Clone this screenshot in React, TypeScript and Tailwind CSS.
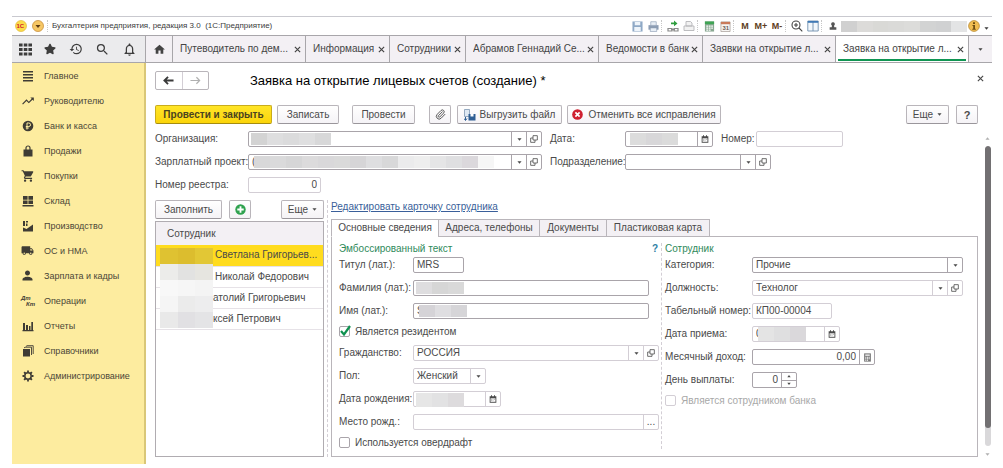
import { useId, useState } from 'react';
import type { ReactNode } from 'react';
import { FaStar } from 'react-icons/fa';
import { MdHistory, MdSearch, MdNotificationsNone, MdHome, MdLocalShipping, MdShoppingCart, MdPerson, MdTrendingUp } from 'react-icons/md';
import { Paperclip } from 'lucide-react';

const Svg = ({ children, className = 'size-3' }: { children: ReactNode; className?: string }) => (
  <svg viewBox="0 0 12 12" className={className} fill="currentColor" aria-hidden="true">
    {children}
  </svg>
);

const Caret = () => (
  <Svg className="size-[5px] shrink-0">
    <path d="M1 3h10L6 9z" />
  </Svg>
);

const CloseIcon = () => (
  <Svg className="size-[7px]">
    <path d="M1.5 1.5l9 9M10.5 1.5l-9 9" stroke="currentColor" strokeWidth="2" />
  </Svg>
);

const OpenIcon = () => (
  <Svg className="size-2">
    <path d="M4.5 1h6.500v6.500h-6.500zM4.500 4.500h-3.500v6.500h6.500v-3.500" fill="none" stroke="currentColor" strokeWidth="1.200" />
  </Svg>
);

const CalendarIcon = () => (
  <Svg className="size-2">
    <path d="M1 2h2V.5h1.500V2h3V.5H9V2h2v9.500H1z" />
    <path d="M2.300 5h7.400v5.200H2.300z" fill="#fff" />
    <path d="M3.200 6h1.200v1H3.200zM5.400 6h1.200v1H5.400zM7.600 6h1.200v1H7.600zM3.200 8h1.200v1H3.200zM5.400 8h1.200v1H5.400z" fill="#999" />
  </Svg>
);

const CalcIcon = () => (
  <Svg className="size-[9px]">
    <path d="M1.500.5h9v11h-9z" fill="#777" />
    <path d="M3 2h6v1.800H3zM3 5h1.500v1.200H3zM5.300 5h1.500v1.200H5.300zM7.500 5H9v1.200H7.500zM3 7h1.500v1.200H3zM5.300 7h1.500v1.200H5.300zM7.500 7H9v1.200H7.500zM3 9h1.500v1.200H3zM5.300 9h1.500v1.200H5.300z" fill="#fff" />
  </Svg>
);

// Grey cells that hide personal data
const Mosaic = ({ cells, className }: { cells: string[]; className: string }) => (
  <span className={`absolute flex pointer-events-none ${className}`} aria-hidden="true">
    {cells.map((c, i) => (
      <span key={i} className={`flex-1 ${c}`} />
    ))}
  </span>
);

type FieldProps = {
  label: string;
  labelClass: string;
  width: string;
  value?: string;
  kind?: 'text' | 'select' | 'number' | 'spin';
  tail?: ('open' | 'calendar' | 'calc' | 'dots')[];
  light?: boolean;
  mosaic?: ReactNode;
};

const tailIcons = { open: <OpenIcon />, calendar: <CalendarIcon />, calc: <CalcIcon />, dots: '...' };
const tailNames = { open: 'Открыть', calendar: 'Календарь', calc: 'Калькулятор', dots: 'Выбрать' };

const Field = ({ label, labelClass, width, value = '', kind = 'text', tail = [], light, mosaic }: FieldProps) => {
  const id = useId();
  const line = light ? 'border-[#d3ced5]' : 'border-[#a9a4aa]';
  const right = kind === 'number' || kind === 'spin';
  return (
    <div className="flex items-center h-4">
      <label htmlFor={id} className={`shrink-0 whitespace-nowrap ${labelClass}`}>
        {label}
      </label>
      <div className={`relative flex h-4 border rounded-[2px] bg-white ${line} ${width}`}>
        {kind === 'select' ? (
          <>
            <select id={id} defaultValue={value} className="flex-1 min-w-0 appearance-none bg-transparent px-[3px] leading-[14px] outline-none">
              <option>{value}</option>
            </select>
            <span className={`w-[15px] shrink-0 flex items-center justify-center border-l pointer-events-none ${line}`}>
              <Caret />
            </span>
          </>
        ) : (
          <input
            id={id}
            defaultValue={value}
            className={`flex-1 min-w-0 bg-transparent px-[3px] leading-[14px] outline-none ${right ? 'text-right' : ''}`}
          />
        )}
        {tail.map((t) => (
          <button key={t} aria-label={tailNames[t]} className={`w-[15px] shrink-0 flex items-center justify-center border-l ${line}`}>
            {tailIcons[t]}
          </button>
        ))}
        {kind === 'spin' && (
          <div className={`w-[15px] shrink-0 flex flex-col border-l ${line}`}>
            <button aria-label="Больше" className={`flex-1 flex items-center justify-center border-b ${line}`}>
              <Svg className="size-1">
                <path d="M1 10h10L6 3z" />
              </Svg>
            </button>
            <button aria-label="Меньше" className="flex-1 flex items-center justify-center">
              <Svg className="size-1">
                <path d="M1 2h10L6 9z" />
              </Svg>
            </button>
          </div>
        )}
        {mosaic}
      </div>
    </div>
  );
};

const Check = ({ label, checked, disabled }: { label: string; checked?: boolean; disabled?: boolean }) => (
  <label className={`flex items-center gap-1 h-3 ${disabled ? 'text-[#a8a8a8]' : ''}`}>
    <span className="relative size-3">
      <input
        type="checkbox"
        defaultChecked={checked}
        disabled={disabled}
        className="peer block size-[11px] appearance-none border border-[#a9a4aa] rounded-[2px] bg-white disabled:border-[#d3ced5]"
      />
      <svg viewBox="0 0 12 12" className="absolute left-0 -top-px size-3 hidden peer-checked:block pointer-events-none" fill="none" aria-hidden="true">
        <path d="M2 6l3 3.500L11 1" stroke="#0f9150" strokeWidth="2.200" />
      </svg>
    </span>
    {label}
  </label>
);

const Button = ({ children, className, label }: { children: ReactNode; className: string; label?: string }) => (
  <button
    aria-label={label}
    className={`h-[19px] shrink-0 flex items-center justify-center gap-1 border rounded-[2px] whitespace-nowrap ${className}`}
  >
    {children}
  </button>
);

const plain = 'border-[#b9b5ba] border-b-[#9a969b] bg-linear-to-b from-white to-[#f5f3f6]';

const sections: { name: string; icon: ReactNode }[] = [
  { name: 'Главное', icon: <Svg><path d="M1 1h10v1.500H1zM1 4h10v1.500H1zM1 7h10v1.500H1zM1 10h10v1.500H1z" /></Svg> },
  { name: 'Руководителю', icon: <MdTrendingUp className="size-[14px]" /> },
  {
    name: 'Банк и касса',
    icon: (
      <Svg>
        <circle cx="6" cy="6" r="5.300" />
        <path d="M5 9.500V3h1.800a1.700 1.700 0 010 3.500H3.800M3.800 8h3" fill="none" stroke="#fdec9f" strokeWidth="1" />
      </Svg>
    ),
  },
  {
    name: 'Продажи',
    icon: (
      <Svg>
        <path d="M1.500 4.500h9v7h-9z" />
        <path d="M4 6V3a2 2 0 014 0v3" fill="none" stroke="currentColor" strokeWidth="1.200" />
      </Svg>
    ),
  },
  { name: 'Покупки', icon: <MdShoppingCart className="size-[14px]" /> },
  { name: 'Склад', icon: <Svg><path d="M1 1h4.600v3.700H1zM6.400 1H11v3.700H6.400zM1 5.500h4.600v3.500H1zM6.400 5.500H11v3.500H6.400zM.5 10h11v1.400H.5z" /></Svg> },
  { name: 'Производство', icon: <Svg><path d="M1 11.500V7.500L4.500 9 11 4.500v7zM1 1h2v5H1zM4 1h2v1.500H4zM4 3.500h1.500V6H4z" /></Svg> },
  { name: 'ОС и НМА', icon: <MdLocalShipping className="size-[13px]" /> },
  { name: 'Зарплата и кадры', icon: <MdPerson className="size-[15px]" /> },
  {
    name: 'Операции',
    icon: (
      <span className="w-[13px] text-[6px] leading-[6px] font-bold italic">
        Дт
        <span className="block pl-[5px]">Кт</span>
      </span>
    ),
  },
  { name: 'Отчеты', icon: <Svg><path d="M1 3h2v7H1zM4 5h2v5H4zM7 6h1.500v4H7zM9.300 2h1.700v8H9.300zM.5 10h11v1.200H.5z" /></Svg> },
  {
    name: 'Справочники',
    icon: (
      <Svg>
        <path d="M1 4h7v7.500H1z" />
        <path d="M2 3l1-.8h6.500V10M4 1.500L5 .7h6.200V9" fill="none" stroke="currentColor" strokeWidth=".9" />
      </Svg>
    ),
  },
  {
    name: 'Администрирование',
    icon: (
      <Svg>
        <circle cx="6" cy="6" r="3.200" fill="none" stroke="currentColor" strokeWidth="1.500" />
        <path d="M6 .5v2M6 9.500v2M.5 6h2M9.500 6h2M2.100 2.100l1.400 1.400M8.500 8.500l1.400 1.400M2.100 9.900l1.400-1.400M8.500 3.500l1.400-1.400" stroke="currentColor" strokeWidth="1.800" />
      </Svg>
    ),
  },
];

const openTabs = [
  { title: 'Путеводитель по дем...', width: 'w-[133px]' },
  { title: 'Информация', width: 'w-[84px]' },
  { title: 'Сотрудники', width: 'w-[76px]' },
  { title: 'Абрамов Геннадий Се...', width: 'w-[133px]' },
  { title: 'Ведомости в банк', width: 'w-[104px]' },
  { title: 'Заявки на открытие л...', width: 'w-[133px]' },
  { title: 'Заявка на открытие л...', width: 'w-[133px]' },
];

const employees = [
  { name: 'Светлана Григорьев...', pad: 'pl-[59px]' },
  { name: 'Николай Федорович', pad: 'pl-[59px]' },
  { name: 'атолий Григорьевич', pad: 'pl-[57px]' },
  { name: 'ксей Петрович', pad: 'pl-[57px]' },
];

const employeeMosaic = [
  'bg-[#dfc231]', 'bg-[#dcbd2e]', 'bg-[#e2c735]',
  'bg-[#ececea]', 'bg-[#e2e2e1]', 'bg-[#e6e5e0]',
  'bg-[#f8f8f8]', 'bg-[#f6f6f6]', 'bg-[#f4f4f4]',
  'bg-[#f5f5f5]', 'bg-[#ebebeb]', 'bg-[#ededee]',
  'bg-[#e9e9e9]', 'bg-[#e1e0e3]', 'bg-[#e4e4e6]',
];

const cardTabs = [
  { name: 'Основные сведения', width: 'w-[108px]' },
  { name: 'Адреса, телефоны', width: 'w-[102px]' },
  { name: 'Документы', width: 'w-[68px]' },
  { name: 'Пластиковая карта', width: 'w-[104px]' },
];

const Sep = () => <span className="w-1 h-3 border-l border-dotted border-[#c8c8c8]" />;

const SysButton = ({ label, children }: { label: string; children: ReactNode }) => (
  <button aria-label={label} className="w-4 h-4 flex items-center justify-center">
    {children}
  </button>
);

const TitleBar = () => (
  <header className="flex items-center h-[19px] border-t border-[#c9c9cf] pl-[3px] text-[8px] text-[#3c3c3c]">
    <svg viewBox="0 0 12 12" className="size-3" aria-hidden="true">
      <circle cx="6" cy="6" r="5.500" fill="#fbdc4a" stroke="#e3b93a" strokeWidth=".7" />
      <text x="1.500" y="8" fontSize="6" fontWeight="bold" fill="#d3202a">1С</text>
    </svg>
    <button aria-label="Главное меню" className="ml-[5px]">
      <svg viewBox="0 0 12 12" className="size-3 block" aria-hidden="true">
        <circle cx="6" cy="6" r="5.500" fill="#f6c765" stroke="#c98f3c" strokeWidth=".8" />
        <path d="M3.500 5h5L6 8z" fill="#5b3a14" />
      </svg>
    </button>
    <span className="ml-[3px] h-3 border-l border-dotted border-[#c8c8c8]" />
    <span className="ml-1 whitespace-pre">Бухгалтерия предприятия, редакция 3.0  (1С:Предприятие)</span>

    <div className="ml-auto flex items-center">
      <SysButton label="Сохранить">
        <Svg className="size-[11px]">
          <path d="M.5.5h11v11H.5z" fill="#8fa9c6" />
          <path d="M3 1h6v3.500H3zM2.500 6.500h7v4.500h-7z" fill="#eef4fa" />
        </Svg>
      </SysButton>
      <SysButton label="Печать">
        <Svg className="size-[11px]">
          <path d="M.5 4.500h11v5H.5z" fill="#8c9db4" />
          <path d="M3 .8h6v4H3zM2.500 7.500h7v4h-7z" fill="#e9eff6" stroke="#8c9db4" strokeWidth=".7" />
        </Svg>
      </SysButton>
      <Sep />
      <SysButton label="Получить ссылку">
        <Svg className="size-3">
          <path d="M1 8.500h4v2.500H1zM7 8.500h4v2.500H7zM4 9.700h4" fill="none" stroke="#8a8a8a" strokeWidth="1.200" />
          <path d="M4 4.200V2.500h3V.500l3.500 2.900L7 6.300V4.200z" fill="#2f9e3f" />
        </Svg>
      </SysButton>
      <SysButton label="Перейти по ссылке">
        <Svg className="size-3">
          <path d="M1 6h10v4.500H1zM3 6V1.500h4.500L9 3v3z" fill="#f2f2f2" stroke="#b5b5b9" strokeWidth=".9" />
        </Svg>
      </SysButton>
      <Sep />
      <SysButton label="Калькулятор">
        <Svg className="size-[11px]">
          <path d="M1 .5h10v11H1z" fill="#8aa893" />
          <path d="M1 .5h10v3H1z" fill="#3fa454" />
          <path d="M2.500 5h2v1.300h-2zM5.200 5h2v1.300h-2zM7.900 5h1.800v1.300H7.900zM2.500 7.200h2v1.300h-2zM5.200 7.200h2v1.300h-2zM7.900 7.200h1.800v1.300H7.900zM2.500 9.300h2v1.300h-2zM5.200 9.300h2v1.300h-2z" fill="#fff" />
        </Svg>
      </SysButton>
      <SysButton label="Календарь">
        <Svg className="size-[11px]">
          <path d="M1 1h10v10.500H1z" fill="#f7f5f3" stroke="#a69c98" strokeWidth=".8" />
          <path d="M1 1h10v2.500H1z" fill="#c97a5a" />
          <text x="2.600" y="10" fontSize="6.500" fontWeight="bold" fill="#6b5a55">31</text>
        </Svg>
      </SysButton>
      <Sep />
      {['M', 'M+', 'M-'].map((m) => (
        <button key={m} className="w-4 text-[9px] font-bold text-[#5e3d22]">
          {m}
        </button>
      ))}
      <Sep />
      <SysButton label="Масштаб">
        <Svg className="size-3">
          <path d="M5 1a4 4 0 100 8 4 4 0 000-8zM8 8l3.300 3.300M3 5h4M5 3v4" fill="none" stroke="#444" strokeWidth="1.100" />
        </Svg>
      </SysButton>
      <SysButton label="Панели">
        <Svg className="size-3">
          <path d="M.8 1h10.400v10H.8zM6 2v9" fill="#f3f8fc" stroke="#6f8fae" strokeWidth=".9" />
          <path d="M.8 1h10.400v1.800H.8z" fill="#3f79b5" />
        </Svg>
      </SysButton>
      <Sep />
      <SysButton label="Пользователь">
        <Svg className="size-2 text-[#555]">
          <path d="M6 .5a2.700 2.700 0 011.500 5L8 8h3v3.500H1V8h3l.5-2.500A2.700 2.700 0 016 .5z" />
        </Svg>
      </SysButton>
      <span className="relative w-[126px] h-[11px]">
        <Mosaic
          className="inset-0"
          cells={['bg-[#d0d0d0]', 'bg-[#dcdbd9]', 'bg-[#d9d9d6]', 'bg-[#dadad8]', 'bg-[#dcdcda]', 'bg-[#d2d3d3]', 'bg-[#d0d1d2]', 'bg-[#e3e4e5]']}
        />
      </span>
      <button aria-label="О программе" className="ml-px mr-1">
        <svg viewBox="0 0 12 12" className="size-3 block" aria-hidden="true">
          <circle cx="6" cy="6" r="5.400" fill="#f0bd52" stroke="#b98a35" strokeWidth=".8" />
          <path d="M5 2.300h2v1.600H5zM4.500 5H7v3.800h.8v1H4.300v-1h.9V6h-.7z" fill="#6e4d12" />
        </svg>
      </button>
      <button aria-label="Еще" className="w-2 mt-1">
        <Caret />
      </button>
    </div>
  </header>
);

const TabBar = () => {
  const [active, setActive] = useState(openTabs.length - 1);
  return (
    <div className="flex h-7 border-y border-[#a8a6aa] bg-[#f3f0f4] text-[#444]">
      <div className="w-[133px] shrink-0 flex items-center justify-between pl-[7px] pr-[8px] bg-[#ebebed] text-[#3d3d3d]">
        <button aria-label="Меню функций">
          <Svg className="size-[13px]">
            <path d="M0 .5h3.300v2.800H0zM4.400.5h3.300v2.800H4.400zM8.700.5H12v2.800H8.700zM0 4.600h3.300v2.800H0zM4.400 4.600h3.300v2.800H4.400zM8.700 4.600H12v2.800H8.700zM0 8.700h3.300v2.800H0zM4.400 8.700h3.300v2.800H4.400zM8.700 8.700H12v2.800H8.700z" />
          </Svg>
        </button>
        <button aria-label="Избранное"><FaStar className="size-3" /></button>
        <button aria-label="История"><MdHistory className="size-[14px]" /></button>
        <button aria-label="Поиск"><MdSearch className="size-[15px]" /></button>
        <button aria-label="Уведомления"><MdNotificationsNone className="size-[15px]" /></button>
      </div>
      <button aria-label="Начальная страница" className="w-[27px] shrink-0 flex items-center justify-center border-l border-[#a8a6aa]">
        <MdHome className="size-[13px]" />
      </button>
      {openTabs.map((tab, i) => (
        <div
          key={tab.title}
          className={`relative min-w-0 flex items-center justify-between border-l border-[#a8a6aa] pl-[7px] pr-1 ${tab.width} ${i === active ? 'bg-white' : ''}`}
        >
          <button onClick={() => setActive(i)} className="min-w-0 whitespace-nowrap overflow-hidden">
            {tab.title}
          </button>
          <button aria-label="Закрыть" className="shrink-0">
            <CloseIcon />
          </button>
          {i === active && <span className="absolute left-[2px] right-[2px] bottom-px h-[2px] bg-[#109553]" />}
        </div>
      ))}
      <button aria-label="Список вкладок" className="flex-1 flex items-center justify-center border-l border-[#a8a6aa]">
        <Caret />
      </button>
    </div>
  );
};

const EmployeeCard = () => {
  const [tab, setTab] = useState(0);
  return (
    <div className="flex-1 min-w-0 flex flex-col">
      <a href="#card" className="self-start h-[14px] leading-[14px] mb-[5px] text-[#3a5f9a] underline">
        Редактировать карточку сотрудника
      </a>
      <div role="tablist" className="flex h-[18px] -mb-px z-10">
        {cardTabs.map((t, i) => (
          <button
            key={t.name}
            role="tab"
            aria-selected={i === tab}
            onClick={() => setTab(i)}
            className={`border border-[#b9b5ba] -mr-px whitespace-nowrap ${t.width} ${i === tab ? 'bg-white border-b-white' : 'bg-[#f3f0f4]'}`}
          >
            {t.name}
          </button>
        ))}
      </div>
      <div className="flex-1 grid grid-cols-[330px_1fr] border border-[#b9b5ba] pt-[6px] pb-[7px]">
        <div className="pl-[7px] border-r border-dashed border-[#d3ced5]">
          <div className="flex items-center justify-between h-3 mb-[2px] pr-[3px]">
            <h2 className="text-[#2f8a5b]">Эмбоссированный текст</h2>
            <button aria-label="Справка" className="font-bold text-[#2f7fa5]">?</button>
          </div>
          <div className="flex flex-col gap-[7px]">
            <Field label="Титул (лат.):" labelClass="w-[74px]" width="w-[51px]" value="MRS" />
            <Field
              label="Фамилия (лат.):"
              labelClass="w-[74px]"
              width="w-[236px]"
              mosaic={<Mosaic className="left-[2px] top-px h-3 w-12" cells={['bg-[#dedddf]', 'bg-[#d6d6d6]', 'bg-[#d9d9d9]']} />}
            />
            <Field
              label="Имя (лат.):"
              labelClass="w-[74px]"
              width="w-[236px]"
              value="S"
              mosaic={<Mosaic className="left-[5px] top-px h-3 w-12" cells={['bg-[#d5d3d7]', 'bg-[#dfdee1]', 'bg-[#d6d5d8]']} />}
            />
            <Check label="Является резидентом" checked />
            <Field label="Гражданство:" labelClass="w-[74px]" width="w-[246px]" value="РОССИЯ" kind="select" tail={['open']} light />
            <Field label="Пол:" labelClass="w-[74px]" width="w-[73px]" value="Женский" kind="select" light />
            <Field
              label="Дата рождения:"
              labelClass="w-[74px]"
              width="w-[88px]"
              tail={['calendar']}
              light
              mosaic={<Mosaic className="left-[2px] top-px h-[14px] w-12" cells={['bg-[#e6e6e6]', 'bg-[#e2e2e3]', 'bg-[#dddbdd]']} />}
            />
            <Field label="Место рожд.:" labelClass="w-[74px]" width="w-[246px]" tail={['dots']} light />
            <Check label="Используется овердрафт" />
          </div>
        </div>
        <div className="pl-[3px] pr-[14px]">
          <h2 className="h-3 mb-[2px] leading-3 text-[#2f8a5b]">Сотрудник</h2>
          <div className="flex flex-col gap-[7px]">
            <Field label="Категория:" labelClass="w-[87px]" width="w-[211px]" value="Прочие" kind="select" />
            <Field label="Должность:" labelClass="w-[87px]" width="w-[211px]" value="Технолог" kind="select" tail={['open']} light />
            <Field label="Табельный номер:" labelClass="w-[87px]" width="w-[80px]" value="КП00-00004" light />
            <Field
              label="Дата приема:"
              labelClass="w-[87px]"
              width="w-[88px]"
              value="0"
              tail={['calendar']}
              light
              mosaic={<Mosaic className="left-[5px] top-0 h-[14px] w-12" cells={['bg-[#e4e4e4]', 'bg-[#dfdfe0]', 'bg-[#dad8db]']} />}
            />
            <Field label="Месячный доход:" labelClass="w-[87px]" width="w-[123px]" value="0,00" kind="number" tail={['calc']} />
            <Field label="День выплаты:" labelClass="w-[87px]" width="w-[45px]" value="0" kind="spin" />
            <Check label="Является сотрудником банка" disabled />
          </div>
        </div>
      </div>
    </div>
  );
};

const EmployeeList = () => (
  <div className="w-[169px] shrink-0 flex flex-col">
    <div className="flex gap-[7px] mb-[2px]">
      <Button className={`w-[67px] ${plain}`}>Заполнить</Button>
      <Button className={`w-[22px] ${plain}`} label="Добавить">
        <Svg className="size-[11px]">
          <circle cx="6" cy="6" r="5.700" fill="#2fa24f" />
          <path d="M5 2.500h2V5h2.500v2H7v2.500H5V7H2.500V5H5z" fill="#fff" />
        </Svg>
      </Button>
      <Button className={`w-[43px] ml-auto ${plain}`}>
        Еще <Caret />
      </Button>
    </div>
    <div className="relative flex-1 border border-[#b0acb1]">
      <table className="w-full border-collapse">
        <thead>
          <tr className="h-[23px] bg-[#f3f0f4]">
            <th className="pl-[11px] text-left font-normal">Сотрудник</th>
          </tr>
        </thead>
        <tbody>
          {employees.map((e, i) => (
            <tr key={e.name} className={`h-[21px] border-b border-[#e6e2e7] ${i === 0 ? 'bg-[#ffdc1e]' : ''}`}>
              <td className={`whitespace-nowrap ${e.pad}`}>{e.name}</td>
            </tr>
          ))}
        </tbody>
      </table>
      <div className="absolute left-1 top-[26px] grid grid-cols-3 w-[53px] pointer-events-none" aria-hidden="true">
        {employeeMosaic.map((c, i) => (
          <span key={i} className={`h-4 ${c}`} />
        ))}
      </div>
    </div>
  </div>
);

const App = () => (
  <div className="min-h-screen flex flex-col bg-white pt-4 pb-1 pl-3 pr-[11px] font-['Liberation_Sans',Arial,sans-serif] text-[10px] leading-3 text-[#4a4a4a]">
    <TitleBar />
    <TabBar />
    <div className="flex-1 flex">
      <nav className="w-[134px] shrink-0 bg-[#fdec9f] border-r-2 border-[#d9c778] text-[9px] text-[#4b4637]">
        {sections.map((s) => (
          <a key={s.name} href="#section" className="flex items-center h-[25px] pl-2">
            <span className="w-[15px] mr-[9px] flex justify-center text-[#3f3c35]">{s.icon}</span>
            {s.name}
          </a>
        ))}
      </nav>

      <main className="flex-1 min-w-0 flex flex-col pl-[9px] pt-2 pb-[7px]">
        <div className="flex items-center h-[19px] mb-[15px] pr-[8px]">
          <div className="flex h-[19px] w-[54px] border border-[#b9b5ba] rounded-[2px]">
            <button aria-label="Назад" className="flex-1 flex items-center justify-center text-[#3a3a3a]">
              <Svg className="size-[11px]">
                <path d="M5.500 2L1.500 6l4 4M1.500 6h10" fill="none" stroke="currentColor" strokeWidth="2" />
              </Svg>
            </button>
            <button aria-label="Вперед" className="flex-1 flex items-center justify-center border-l border-[#d3ced5] text-[#b0b0b0]">
              <Svg className="size-[11px]">
                <path d="M7 2.500L10.500 6 7 9.500M10.500 6h-10" fill="none" stroke="currentColor" strokeWidth="1.300" />
              </Svg>
            </button>
          </div>
          <h1 className="ml-[41px] text-[13px] leading-4 text-black">Заявка на открытие лицевых счетов (создание) *</h1>
          <button aria-label="Закрыть" className="ml-auto mb-1">
            <CloseIcon />
          </button>
        </div>

        <div className="flex mb-[7px] pr-[14px]">
          <Button className="w-[117px] border-[#c9ac1c] border-b-[#a58c10] bg-linear-to-b from-[#ffe526] to-[#fbd408] font-bold text-[#4a4320]">
            Провести и закрыть
          </Button>
          <Button className={`w-[62px] ml-[5px] ${plain}`}>Записать</Button>
          <Button className={`w-[63px] ml-[13px] ${plain}`}>Провести</Button>
          <Button className={`w-[22px] ml-[14px] ${plain}`} label="Файлы">
            <Paperclip className="size-[11px]" />
          </Button>
          <Button className={`w-[105px] ml-[6px] ${plain}`}>
            <Svg className="size-3">
              <path d="M.5.500h5v7h-5z" fill="#dfe9f3" stroke="#7d97b3" strokeWidth=".8" />
              <path d="M4.500 5h7v6.500h-7z" fill="#2f5f94" />
              <path d="M6.500 5h3v2.500h-3z" fill="#fff" />
              <path d="M1.500 8v3M0 9.500l1.500 2 1.500-2" fill="none" stroke="#2f5f94" strokeWidth="1" />
            </Svg>
            Выгрузить файл
          </Button>
          <Button className={`w-[154px] ml-[5px] ${plain}`}>
            <Svg className="size-[11px] mr-px">
              <circle cx="6" cy="6" r="5.800" fill="#cf2030" />
              <path d="M3.700 3.700l4.600 4.600M8.300 3.700L3.700 8.300" stroke="#fff" strokeWidth="1.800" />
            </Svg>
            Отменить все исправления
          </Button>
          <Button className={`w-[43px] ml-auto ${plain}`}>
            Еще <Caret />
          </Button>
          <Button className={`w-[22px] ml-[7px] ${plain}`}>
            <b className="text-[11px]">?</b>
          </Button>
        </div>

        <div className="flex-1 flex">
          <div className="flex-1 min-w-0 flex flex-col gap-[7px]">
            <div className="flex gap-2">
              <Field
                label="Организация:"
                labelClass="w-[93px]"
                width="w-[294px]"
                kind="select"
                tail={['open']}
                mosaic={
                  <Mosaic
                    className="left-[2px] top-px h-3 w-20"
                    cells={['bg-[#d3d3d3]', 'bg-[#dededf]', 'bg-[#dbdbdc]', 'bg-[#dfdfe0]', 'bg-[#d8d8d9]']}
                  />
                }
              />
              <Field
                label="Дата:"
                labelClass="w-[75px]"
                width="w-[88px]"
                tail={['calendar']}
                mosaic={<Mosaic className="left-1 top-px h-3 w-12" cells={['bg-[#dcdcdc]', 'bg-[#d8d7d9]', 'bg-[#dbdbdb]']} />}
              />
              <Field label="Номер:" labelClass="w-[35px]" width="w-[87px]" light />
            </div>
            <div className="flex gap-2">
              <Field
                label="Зарплатный проект:"
                labelClass="w-[93px]"
                width="w-[294px]"
                value="("
                kind="select"
                tail={['open']}
                mosaic={
                  <Mosaic
                    className="left-[5px] top-px h-3 w-[240px]"
                    cells={['bg-[#d8d8d9]', 'bg-[#dadadb]', 'bg-[#d6d6d7]', 'bg-[#dcdbdc]', 'bg-[#d9d8da]', 'bg-[#dadada]', 'bg-[#d6d5d7]', 'bg-[#dedee0]', 'bg-[#d8d8d9]', 'bg-[#ebebec]', 'bg-[#eeeeee]', 'bg-[#e5e5e6]', 'bg-[#dfdfe1]', 'bg-[#dbd8dc]', 'bg-[#f6f6f6]']}
                  />
                }
              />
              <Field label="Подразделение:" labelClass="w-[75px]" width="w-[146px]" kind="select" tail={['open']} />
            </div>
            <Field label="Номер реестра:" labelClass="w-[93px]" width="w-[73px]" value="0" kind="number" light />
            <div className="flex-1 flex">
              <EmployeeList />
              <div className="w-[7px] shrink-0 flex justify-center">
                <span className="border-l border-dashed border-[#d3ced5]" />
              </div>
              <EmployeeCard />
            </div>
          </div>
          <div className="w-[14px] shrink-0 flex flex-col items-center pl-[5px] pt-[5px] text-[#b0b0b0]" aria-hidden="true">
            <span className="rotate-180">
              <Caret />
            </span>
            <div className="w-[6px] mt-[5px] mb-[6px] flex-1 rounded-full bg-[#d9d8da] overflow-hidden">
              <div className="h-[94%] rounded-full bg-[#727072]" />
            </div>
            <Caret />
          </div>
        </div>
      </main>
    </div>
  </div>
);

export default App;
